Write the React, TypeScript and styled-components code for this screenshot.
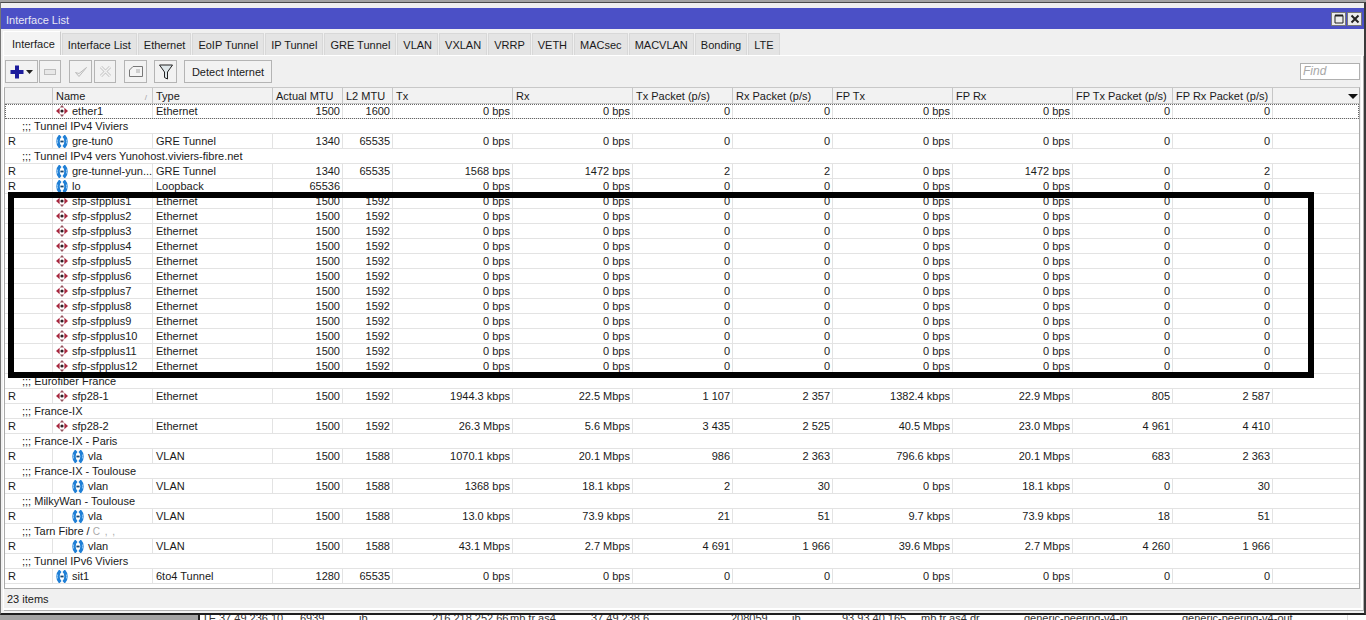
import React from 'react';
import styled, { createGlobalStyle } from 'styled-components';

const GlobalStyle = createGlobalStyle`
  html, body {
    margin: 0;
    padding: 0;
    background: #a3a3a3;
  }
  body {
    font-family: 'Liberation Sans', Arial, sans-serif;
    font-size: 11px;
    color: #1a1a1a;
    overflow: hidden;
  }
`;

const columns = '48px 100px 120px 70px 50px 120px 120px 100px 100px 120px 120px 100px 100px 1fr';

const Page = styled.div`
  position: relative;
  width: 1366px;
  height: 620px;
  display: flex;
  flex-flow: column;
  overflow: hidden;
`;

const Window = styled.div`
  flex: none;
  height: 613px;
  margin-top: 2px;
  border-top: 1px solid #4a4a4a;
  border-right: 2px solid #3a3a3a;
  border-bottom: 2px solid #1e1e1e;
  border-left: 1px solid #777;
  background: #f0f0f0;
  display: flex;
  flex-flow: column;
  box-sizing: border-box;
  padding: 5px 0 0 0;
`;

const TitleBar = styled.div`
  height: 21px;
  flex: none;
  background: #4b50c6;
  color: #e8e8f4;
  display: flex;
  align-items: center;
  justify-content: space-between;
  padding: 0 2px 0 5px;
`;

const TitleText = styled.span`
  padding-top: 3px;
`;

const TitleButtons = styled.div`
  display: flex;
  gap: 1px;
`;

const TitleButton = styled.div`
  width: 15px;
  height: 14px;
  box-sizing: border-box;
  border: 1px solid #777;
  background: #ececec;
  display: flex;
  align-items: center;
  justify-content: center;
`;

const Tabs = styled.div`
  display: flex;
  height: 26px;
  flex: none;
  align-items: flex-end;
  padding-left: 2px;
`;

const Tab = styled.div<{ $active?: boolean }>`
  height: ${(p) => (p.$active ? 24 : 22)}px;
  box-sizing: border-box;
  display: flex;
  align-items: center;
  justify-content: center;
  padding: 0 ${(p) => (p.$active ? '5px 0 8px' : '5px')};
  margin-right: 1px;
  background: ${(p) => (p.$active ? '#f4f4f4' : '#e4e4e4')};
  border: 1px solid #d4d4d4;
  border-bottom: none;
  border-color: ${(p) => (p.$active ? '#fff #ccc #fff #fff' : '#d8d8d8')};
  white-space: nowrap;
`;

const Panel = styled.div`
  flex: 1;
  margin: 0 1px 3px 2px;
  border-top: 1px solid #fff;
  border-right: 2px solid #fff;
  border-bottom: 2px solid #fff;
  border-left: 1px solid #fff;
  box-shadow: 1px 1px 0 #b0b0b0;
  display: flex;
  flex-flow: column;
  min-height: 0;
`;

const Toolbar = styled.div`
  height: 31px;
  flex: none;
  display: flex;
  align-items: center;
  padding-left: 1px;
`;

const ToolButton = styled.div<{ $width?: number; $gap?: number }>`
  width: ${(p) => p.$width ?? 23}px;
  height: 23px;
  box-sizing: border-box;
  margin-right: ${(p) => p.$gap ?? 0}px;
  border: 1px solid #b4b4b4;
  background: #f2f2f2;
  display: flex;
  align-items: center;
  justify-content: center;
  gap: 2px;
`;

const FindBox = styled.div`
  margin-left: auto;
  margin-right: 1px;
  width: 60px;
  height: 17px;
  box-sizing: border-box;
  border: 1px solid #b0b0b0;
  background: #fff;
  color: #a8a8a8;
  font-style: italic;
  font-size: 12px;
  padding-left: 2px;
  line-height: 15px;
`;

const Table = styled.div`
  flex: 1;
  min-height: 0;
  margin: 0 1px 0 0;
  background: #fff;
  border: 1px solid #aaa;
  border-top: 1px solid #c8c8c8;
  overflow: hidden;
`;

const HeaderRow = styled.div`
  display: grid;
  grid-template-columns: ${columns};
  height: 16px;
  background: #f2f2f2;
`;

const HeaderCell = styled.div`
  position: relative;
  box-sizing: border-box;
  padding: 0 3px;
  line-height: 16px;
  border-right: 1px solid #c6c6c6;
  border-bottom: 1px solid #c6c6c6;
  white-space: nowrap;
  overflow: hidden;
  &:last-child {
    border-right: none;
  }
`;

const SortMark = styled.span`
  position: absolute;
  right: 5px;
  top: 2px;
  color: #a0a0a0;
  font-size: 8px;
`;

const MenuArrow = styled.span`
  position: absolute;
  right: 1px;
  top: 6px;
  width: 0;
  height: 0;
  border-left: 5px solid transparent;
  border-right: 5px solid transparent;
  border-top: 5px solid #111;
`;

const Row = styled.div<{ $focus?: boolean }>`
  display: grid;
  grid-template-columns: ${columns};
  height: 15px;
  box-sizing: border-box;
  border-bottom: 1px solid #e3e3e3;
  outline: ${(p) => (p.$focus ? '1px dotted #666' : 'none')};
  outline-offset: -1px;
`;

const Cell = styled.div<{ $right?: boolean }>`
  box-sizing: border-box;
  padding: 0 2px 0 3px;
  line-height: 15px;
  border-right: 1px solid #e3e3e3;
  text-align: ${(p) => (p.$right ? 'right' : 'left')};
  white-space: nowrap;
  overflow: hidden;
  &:last-child {
    border-right: none;
  }
`;

const NameCell = styled(Cell)<{ $indent?: boolean }>`
  display: flex;
  align-items: center;
  gap: 4px;
  padding-left: ${(p) => (p.$indent ? 19 : 3)}px;
`;

const CommentRow = styled.div`
  height: 15px;
  box-sizing: border-box;
  line-height: 15px;
  padding-left: 17px;
  border-bottom: 1px solid #e3e3e3;
  white-space: nowrap;
`;

const Redacted = styled.span`
  color: #aaa;
  letter-spacing: 1px;
  font-size: 10px;
`;

const StatusBar = styled.div`
  height: 19px;
  flex: none;
  display: flex;
  align-items: center;
  padding-left: 3px;
`;

const Behind = styled.div`
  flex: 1;
  min-height: 0;
  margin-left: 198px;
  background: #fff;
  border-left: 2px solid #222;
  overflow: hidden;
  display: grid;
  grid-template-columns: 17px 81px 59px 73px 78px 81px 140px 61px 50px 79px 103px 158px 168px 1fr;
  line-height: 14px;
  color: #333;
`;

const BehindCell = styled.div`
  padding-left: 2px;
  white-space: nowrap;
  margin-top: -4px;
  &:nth-child(13) {
    border-right: 1px solid #ddd;
  }
`;

// black frame drawn over the screenshot by hand
const Highlight = styled.div`
  position: absolute;
  left: 8px;
  top: 192px;
  width: 1306px;
  height: 186px;
  box-sizing: border-box;
  border: 6px solid #000;
  pointer-events: none;
`;

const EtherIcon: React.FC = () => (
  <svg width="12" height="12" viewBox="0 0 12 12" style={{ flex: 'none' }}>
    <path d="M3.6 2.8 L0 6 L3.6 9.2 Z" fill="#a8283f" />
    <path d="M8.4 2.8 L12 6 L8.4 9.2 Z" fill="#a8283f" />
    <path d="M3.8 2.4 L6 0 L8.2 2.4 Z" fill="#95505c" />
    <path d="M3.8 9.6 L6 12 L8.2 9.6 Z" fill="#95505c" />
    <circle cx="6" cy="6" r="1.6" fill="#2e2226" />
  </svg>
);

const TunnelIcon: React.FC = () => (
  <svg width="12" height="13" viewBox="0 0 12 13" style={{ flex: 'none' }}>
    <path d="M4.4 0.8 C1.2 3.5 1.2 9.5 4.4 12.2" fill="none" stroke="#1f7fd6" strokeWidth="3.4" />
    <path d="M7.6 0.8 C10.8 3.5 10.8 9.5 7.6 12.2" fill="none" stroke="#1f7fd6" strokeWidth="3.4" />
    <path d="M4.4 6.5 H7.6" stroke="#16456f" strokeWidth="1.8" />
    <path d="M1.6 4.5 C1.3 5.8 1.3 7.2 1.6 8.5" fill="none" stroke="#a8d6f8" strokeWidth="0.8" />
    <path d="M10.4 4.5 C10.7 5.8 10.7 7.2 10.4 8.5" fill="none" stroke="#a8d6f8" strokeWidth="0.8" />
  </svg>
);

type Iface = {
  kind: 'iface';
  flag?: string;
  name: string;
  icon: 'ether' | 'tunnel';
  indent?: boolean;
  type: string;
  mtu: string;
  l2: string;
  tx: string;
  rx: string;
  txp: string;
  rxp: string;
  fptx: string;
  fprx: string;
  fptxp: string;
  fprxp: string;
};

type Comment = { kind: 'comment'; text: string; redacted?: string };

const idle = { tx: '0 bps', rx: '0 bps', txp: '0', rxp: '0', fptx: '0 bps', fprx: '0 bps', fptxp: '0', fprxp: '0' };

const sfpPlus: Iface[] = Array.from({ length: 12 }, (_, i) => ({
  kind: 'iface',
  name: `sfp-sfpplus${i + 1}`,
  icon: 'ether',
  type: 'Ethernet',
  mtu: '1500',
  l2: '1592',
  ...idle,
}));

const rows: (Iface | Comment)[] = [
  { kind: 'iface', name: 'ether1', icon: 'ether', type: 'Ethernet', mtu: '1500', l2: '1600', ...idle },
  { kind: 'comment', text: ';;; Tunnel IPv4 Viviers' },
  { kind: 'iface', flag: 'R', name: 'gre-tun0', icon: 'tunnel', type: 'GRE Tunnel', mtu: '1340', l2: '65535', ...idle },
  { kind: 'comment', text: ';;; Tunnel IPv4 vers Yunohost.viviers-fibre.net' },
  { kind: 'iface', flag: 'R', name: 'gre-tunnel-yun...', icon: 'tunnel', type: 'GRE Tunnel', mtu: '1340', l2: '65535', tx: '1568 bps', rx: '1472 bps', txp: '2', rxp: '2', fptx: '0 bps', fprx: '1472 bps', fptxp: '0', fprxp: '2' },
  { kind: 'iface', flag: 'R', name: 'lo', icon: 'tunnel', type: 'Loopback', mtu: '65536', l2: '', ...idle },
  ...sfpPlus,
  { kind: 'comment', text: ';;; Eurofiber France' },
  { kind: 'iface', flag: 'R', name: 'sfp28-1', icon: 'ether', type: 'Ethernet', mtu: '1500', l2: '1592', tx: '1944.3 kbps', rx: '22.5 Mbps', txp: '1 107', rxp: '2 357', fptx: '1382.4 kbps', fprx: '22.9 Mbps', fptxp: '805', fprxp: '2 587' },
  { kind: 'comment', text: ';;; France-IX' },
  { kind: 'iface', flag: 'R', name: 'sfp28-2', icon: 'ether', type: 'Ethernet', mtu: '1500', l2: '1592', tx: '26.3 Mbps', rx: '5.6 Mbps', txp: '3 435', rxp: '2 525', fptx: '40.5 Mbps', fprx: '23.0 Mbps', fptxp: '4 961', fprxp: '4 410' },
  { kind: 'comment', text: ';;; France-IX - Paris' },
  { kind: 'iface', flag: 'R', name: 'vla', icon: 'tunnel', indent: true, type: 'VLAN', mtu: '1500', l2: '1588', tx: '1070.1 kbps', rx: '20.1 Mbps', txp: '986', rxp: '2 363', fptx: '796.6 kbps', fprx: '20.1 Mbps', fptxp: '683', fprxp: '2 363' },
  { kind: 'comment', text: ';;; France-IX - Toulouse' },
  { kind: 'iface', flag: 'R', name: 'vlan', icon: 'tunnel', indent: true, type: 'VLAN', mtu: '1500', l2: '1588', tx: '1368 bps', rx: '18.1 kbps', txp: '2', rxp: '30', fptx: '0 bps', fprx: '18.1 kbps', fptxp: '0', fprxp: '30' },
  { kind: 'comment', text: ';;; MilkyWan - Toulouse' },
  { kind: 'iface', flag: 'R', name: 'vla', icon: 'tunnel', indent: true, type: 'VLAN', mtu: '1500', l2: '1588', tx: '13.0 kbps', rx: '73.9 kbps', txp: '21', rxp: '51', fptx: '9.7 kbps', fprx: '73.9 kbps', fptxp: '18', fprxp: '51' },
  { kind: 'comment', text: ';;; Tarn Fibre / ', redacted: 'C , ,' },
  { kind: 'iface', flag: 'R', name: 'vlan', icon: 'tunnel', indent: true, type: 'VLAN', mtu: '1500', l2: '1588', tx: '43.1 Mbps', rx: '2.7 Mbps', txp: '4 691', rxp: '1 966', fptx: '39.6 Mbps', fprx: '2.7 Mbps', fptxp: '4 260', fprxp: '1 966' },
  { kind: 'comment', text: ';;; Tunnel IPv6 Viviers' },
  { kind: 'iface', flag: 'R', name: 'sit1', icon: 'tunnel', type: '6to4 Tunnel', mtu: '1280', l2: '65535', ...idle },
];

const tabs = ['Interface', 'Interface List', 'Ethernet', 'EoIP Tunnel', 'IP Tunnel', 'GRE Tunnel', 'VLAN', 'VXLAN', 'VRRP', 'VETH', 'MACsec', 'MACVLAN', 'Bonding', 'LTE'];

const headers = ['', 'Name', 'Type', 'Actual MTU', 'L2 MTU', 'Tx', 'Rx', 'Tx Packet (p/s)', 'Rx Packet (p/s)', 'FP Tx', 'FP Rx', 'FP Tx Packet (p/s)', 'FP Rx Packet (p/s)', ''];

const behind = ['TE', '37.49.236.10', '6939', 'ib', '216.218.252.66', 'mb fr as4', '37.49.238.6', '208059', 'ib', '93.93.40.165', 'mb fr as4 dr', 'generic-peering-v4-in', 'generic-peering-v4-out'];

const App: React.FC = () => {
  return (
    <Page>
      <GlobalStyle />
      <Window>
        <TitleBar>
          <TitleText>Interface List</TitleText>
          <TitleButtons>
            <TitleButton>
              <svg width="10" height="10" viewBox="0 0 10 10">
                <path d="M1 1.5 H9 V9 H1 Z" fill="none" stroke="#222" strokeWidth="1" />
                <path d="M1 1.5 H9" stroke="#222" strokeWidth="2" />
              </svg>
            </TitleButton>
            <TitleButton>
              <svg width="10" height="10" viewBox="0 0 10 10">
                <path d="M1.5 1.5 L8.5 8.5 M8.5 1.5 L1.5 8.5" stroke="#222" strokeWidth="2" />
              </svg>
            </TitleButton>
          </TitleButtons>
        </TitleBar>
        <Tabs>
          {tabs.map((t, i) => (
            <Tab key={t} $active={i === 0}>
              {t}
            </Tab>
          ))}
        </Tabs>
        <Panel>
          <Toolbar>
            <ToolButton $width={33} $gap={1}>
              <svg width="14" height="14" viewBox="0 0 14 14">
                <path d="M5 0.5 H9 V5 H13.5 V9 H9 V13.5 H5 V9 H0.5 V5 H5 Z" fill="#1c1c9c" />
              </svg>
              <svg width="7" height="4" viewBox="0 0 7 4">
                <path d="M0 0 H7 L3.5 4 Z" fill="#222" />
              </svg>
            </ToolButton>
            <ToolButton $width={22} $gap={8}>
              <svg width="12" height="6" viewBox="0 0 12 6">
                <rect x="0.5" y="0.5" width="11" height="5" fill="#e8e8e8" stroke="#bdbdbd" />
              </svg>
            </ToolButton>
            <ToolButton $gap={2}>
              <svg width="14" height="12" viewBox="0 0 14 12">
                <path d="M1.5 6.5 L5 10.5 L12.5 1.5 L5 7.5 Z" fill="#eee" stroke="#bcbcbc" />
              </svg>
            </ToolButton>
            <ToolButton $width={22} $gap={8}>
              <svg width="13" height="13" viewBox="0 0 13 13">
                <path d="M2 2 L11 11 M11 2 L2 11" stroke="#c4c4c4" strokeWidth="3" />
                <path d="M2 2 L11 11 M11 2 L2 11" stroke="#f2f2f2" strokeWidth="1.4" />
              </svg>
            </ToolButton>
            <ToolButton $gap={7}>
              <svg width="14" height="11" viewBox="0 0 14 11">
                <path d="M4 0.5 H13.5 V10.5 H0.5 V4 Z" fill="#f4f4f4" stroke="#777" />
                <path d="M7 4 H11 M7 6 H11" stroke="#aaa" />
              </svg>
            </ToolButton>
            <ToolButton $gap={7}>
              <svg width="14" height="16" viewBox="0 0 14 16">
                <path d="M0.5 1 H13.5 L8.5 8 V15 L5.5 13.5 V8 Z" fill="#dfe7ea" stroke="#222" />
              </svg>
            </ToolButton>
            <ToolButton $width={88}>Detect Internet</ToolButton>
            <FindBox>Find</FindBox>
          </Toolbar>
          <Table>
            <HeaderRow>
              {headers.map((h, i) => (
                <HeaderCell key={i}>
                  {h}
                  {h === 'Name' && <SortMark>/</SortMark>}
                  {i === headers.length - 1 && <MenuArrow />}
                </HeaderCell>
              ))}
            </HeaderRow>
            {rows.map((r, i) =>
              r.kind === 'comment' ? (
                <CommentRow key={i}>
                  {r.text}
                  {r.redacted && <Redacted>{r.redacted}</Redacted>}
                </CommentRow>
              ) : (
                <Row key={i} $focus={i === 0}>
                  <Cell>{r.flag}</Cell>
                  <NameCell $indent={r.indent}>
                    {r.icon === 'ether' ? <EtherIcon /> : <TunnelIcon />}
                    {r.name}
                  </NameCell>
                  <Cell>{r.type}</Cell>
                  <Cell $right>{r.mtu}</Cell>
                  <Cell $right>{r.l2}</Cell>
                  <Cell $right>{r.tx}</Cell>
                  <Cell $right>{r.rx}</Cell>
                  <Cell $right>{r.txp}</Cell>
                  <Cell $right>{r.rxp}</Cell>
                  <Cell $right>{r.fptx}</Cell>
                  <Cell $right>{r.fprx}</Cell>
                  <Cell $right>{r.fptxp}</Cell>
                  <Cell $right>{r.fprxp}</Cell>
                  <Cell />
                </Row>
              ),
            )}
          </Table>
          <StatusBar>23 items</StatusBar>
        </Panel>
      </Window>
      <Behind>
        {behind.map((b, i) => (
          <BehindCell key={i}>{b}</BehindCell>
        ))}
      </Behind>
      <Highlight />
    </Page>
  );
};

export default App;
